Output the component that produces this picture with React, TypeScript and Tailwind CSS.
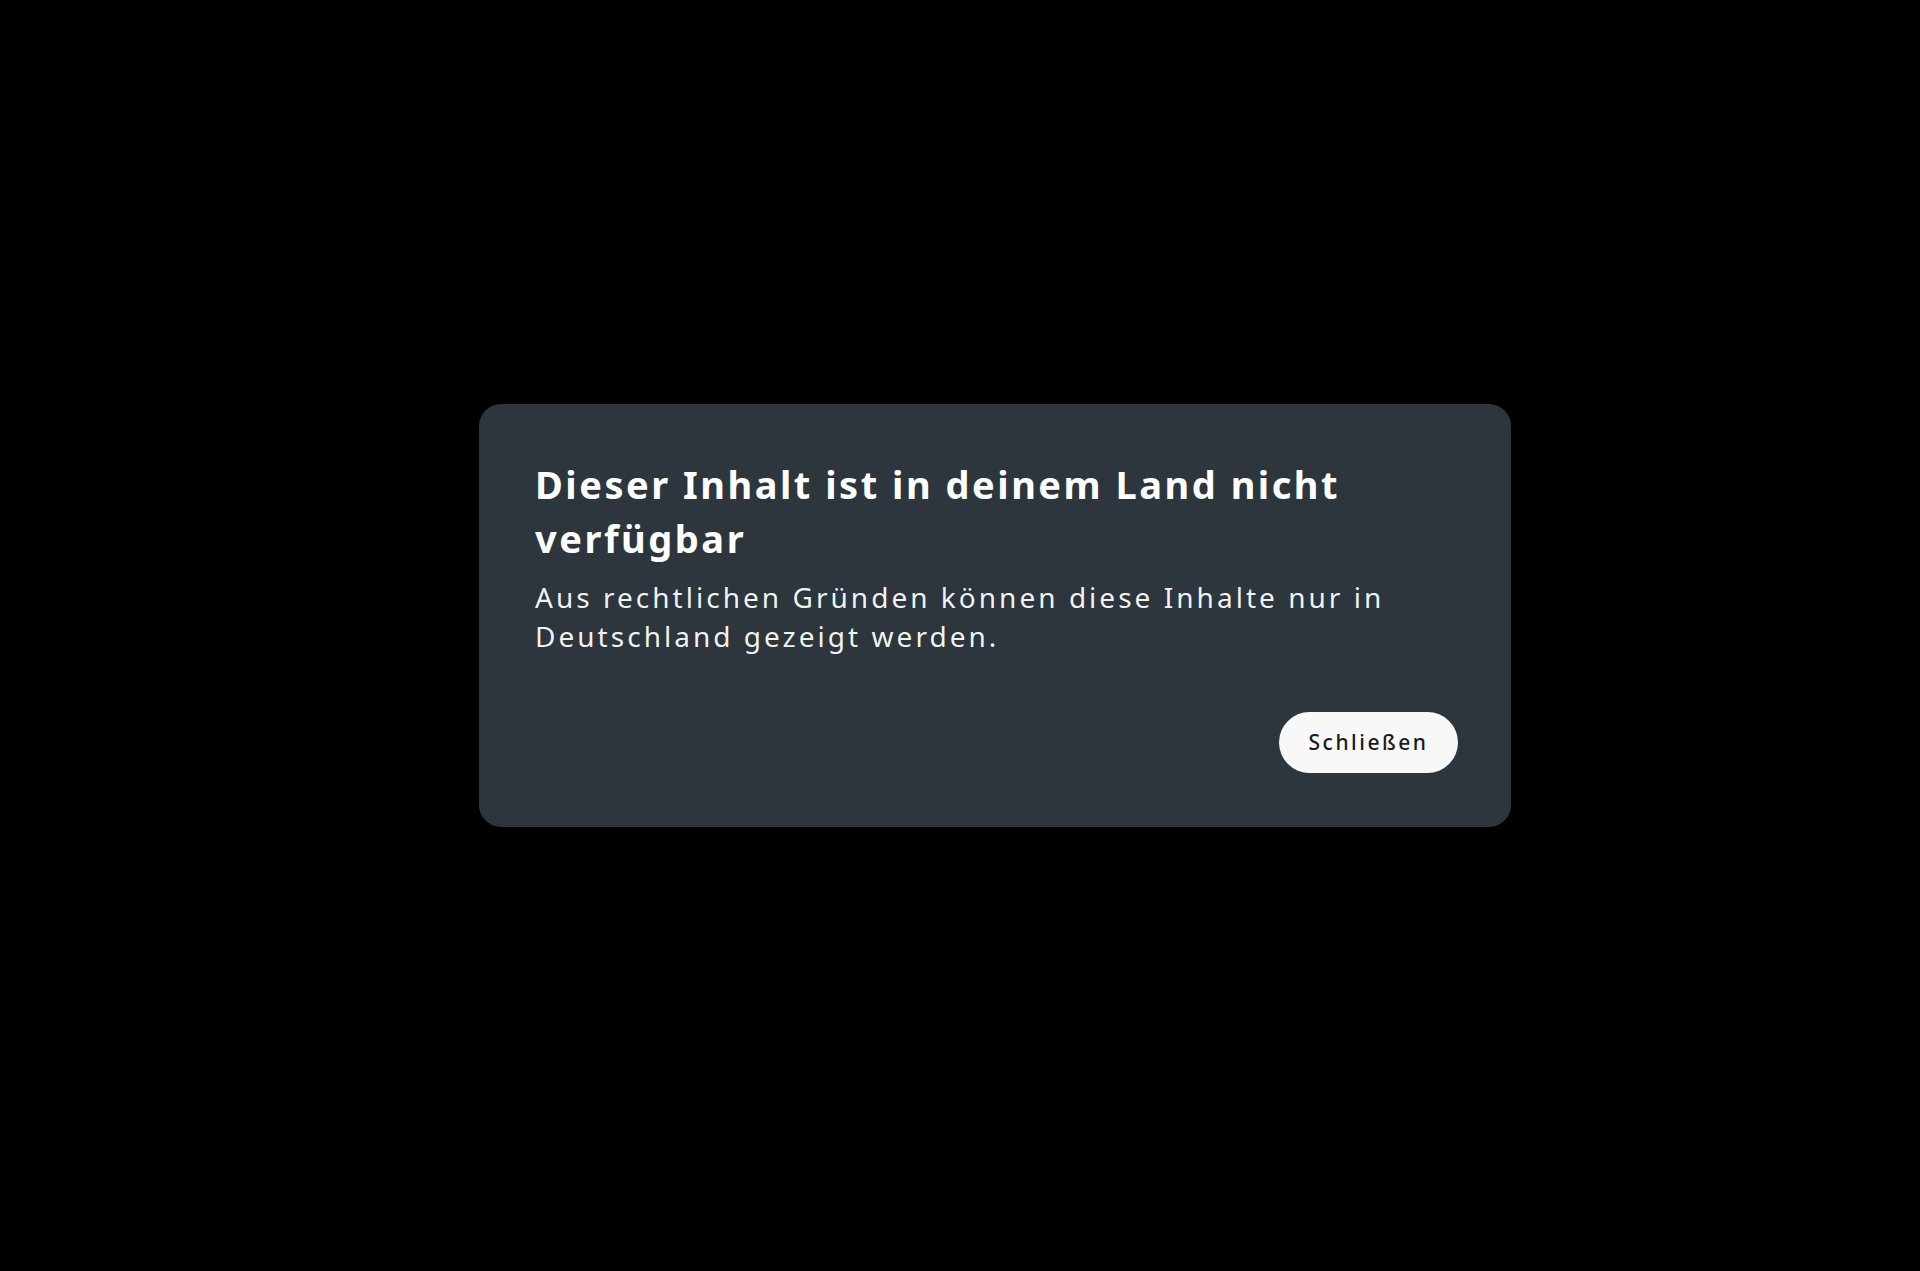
export default function App() {
  return (
    <div
      className="w-full h-[1271px] bg-black flex items-start justify-center pt-[404px]"
      style={{ fontFamily: '"Noto Sans", "Liberation Sans", sans-serif' }}
    >
      <div className="w-[1032px] h-[423px] rounded-[22px] bg-[#2d363d] pl-[56px] pr-[53px] pt-[53px] pb-[54px] flex flex-col ml-[70px]">
        <h1 className="text-[38px] leading-[54px] font-bold text-white tracking-[0.066em] pr-[80px]">
          Dieser Inhalt ist in deinem Land nicht verfügbar
        </h1>
        <p className="mt-[13px] text-[28px] leading-[38.5px] text-white/95 tracking-[0.108em] pr-[40px]">
          Aus rechtlichen Gründen können diese Inhalte nur in Deutschland gezeigt werden.
        </p>
        <div className="mt-auto flex justify-end">
          <button className="h-[61px] w-[179px] rounded-full bg-[#f8f8f8] text-[#1b1b1b] text-[21px] font-medium tracking-[0.12em]">
            Schließen
          </button>
        </div>
      </div>
    </div>
  );
}
